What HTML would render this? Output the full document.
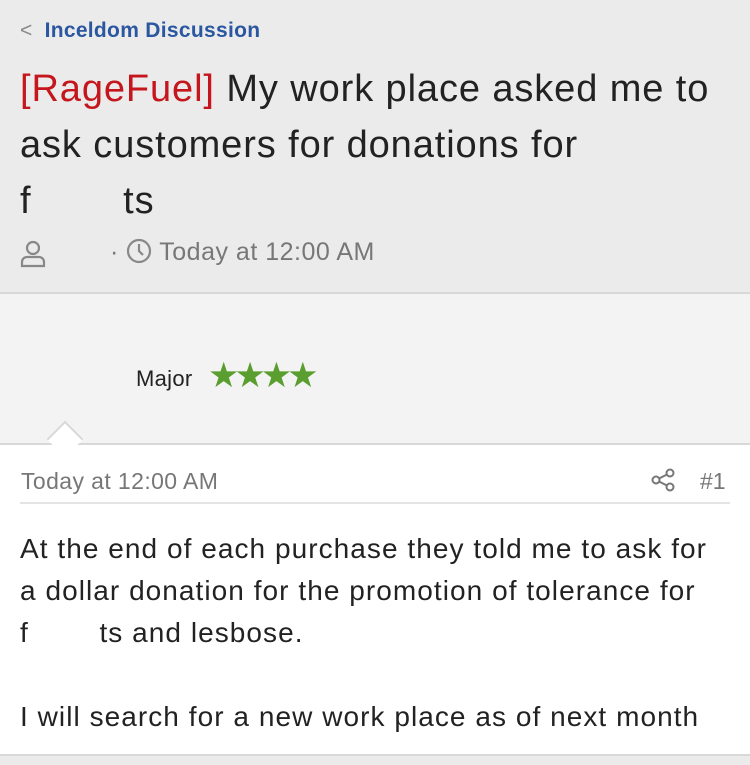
<!DOCTYPE html>
<html><head><style>
body{margin:0;width:750px;height:763px;overflow:hidden;font-family:"Liberation Sans",sans-serif;background:#fff;position:relative}
.hdr{position:absolute;left:0;top:0;width:750px;height:292px;background:#ebebeb;border-bottom:2px solid #d8d8d8}
.back{position:absolute;left:20px;top:19px;font-size:21px;font-weight:bold;color:#2b57a0;letter-spacing:0.3px}
.title{position:absolute;left:20px;top:61px;width:730px;font-size:38px;line-height:56px;color:#222;letter-spacing:0.9px;white-space:nowrap}
.title .p{color:#c4161c}
.meta{position:absolute;left:20px;top:238px;font-size:25px;color:#777;height:32px;letter-spacing:0.5px}
.user-area{position:absolute;left:0;top:294px;width:750px;height:149px;background:#f3f3f3;border-bottom:2px solid #d8d8d8}
.major{position:absolute;left:136px;top:366px;font-size:22px;color:#222;letter-spacing:0.3px}
.stars{position:absolute;left:208px;top:356px;font-size:35px;color:#5a9e2f;letter-spacing:-5px}
.notch{position:absolute;left:52px;top:426px;width:24px;height:24px;background:#fff;border-left:2px solid #d8d8d8;border-top:2px solid #d8d8d8;transform:rotate(45deg)}
.date{position:absolute;left:21px;top:468px;font-size:23px;color:#777;letter-spacing:0.4px}
.num{position:absolute;left:700px;top:468px;font-size:23px;color:#777}
.sep{position:absolute;left:20px;top:502px;width:710px;height:2px;background:#e4e4e4}
.body{position:absolute;left:20px;top:528px;font-size:28px;line-height:42px;color:#222;letter-spacing:1.05px;white-space:nowrap}
.bot{position:absolute;left:0;top:754px;width:750px;height:9px;background:#ebebeb;border-top:2px solid #d8d8d8}
</style></head><body>
<div class="hdr">
<div class="back"><span style="font-weight:normal;color:#888;margin-right:12px">&lt;</span>Inceldom Discussion</div>
<div class="title"><span class="p">[RageFuel]</span> My work place asked me to<br>ask customers for donations for<br>f&nbsp;&nbsp;&nbsp;&nbsp;&nbsp;&nbsp;&nbsp;&nbsp;ts</div>
<svg style="position:absolute;left:20px;top:240px" width="26" height="28" viewBox="0 0 26 28" fill="none" stroke="#888" stroke-width="2.2"><circle cx="13" cy="8" r="6"/><path d="M2 26v-4a5 5 0 0 1 5-5h12a5 5 0 0 1 5 5v4z"/></svg>
<div class="meta" style="left:110px">· <svg width="26" height="26" viewBox="0 0 26 26" fill="none" stroke="#888" stroke-width="2.2" style="vertical-align:-4px"><circle cx="13" cy="13" r="11"/><path d="M13 6v7l4 4"/></svg> Today at 12:00 AM</div>
</div>
<div class="user-area"></div>
<div class="major">Major</div>
<div class="stars">★★★★</div>
<div class="notch"></div>
<div class="date">Today at 12:00 AM</div>
<svg style="position:absolute;left:651px;top:468px" width="26" height="24" viewBox="0 0 26 24" fill="none" stroke="#777" stroke-width="2"><circle cx="5" cy="12" r="3.5"/><circle cx="19" cy="5" r="3.5"/><circle cx="19" cy="19" r="3.5"/><path d="M8 10.5l8-4M8 13.5l8 4"/></svg>
<div class="num">#1</div>
<div class="sep"></div>
<div class="body">At the end of each purchase they told me to ask for<br>a dollar donation for the promotion of tolerance for<br>f&nbsp;&nbsp;&nbsp;&nbsp;&nbsp;&nbsp;&nbsp;&nbsp;ts and lesbose.<br><br>I will search for a new work place as of next month</div>
<div class="bot"></div>
</body></html>
